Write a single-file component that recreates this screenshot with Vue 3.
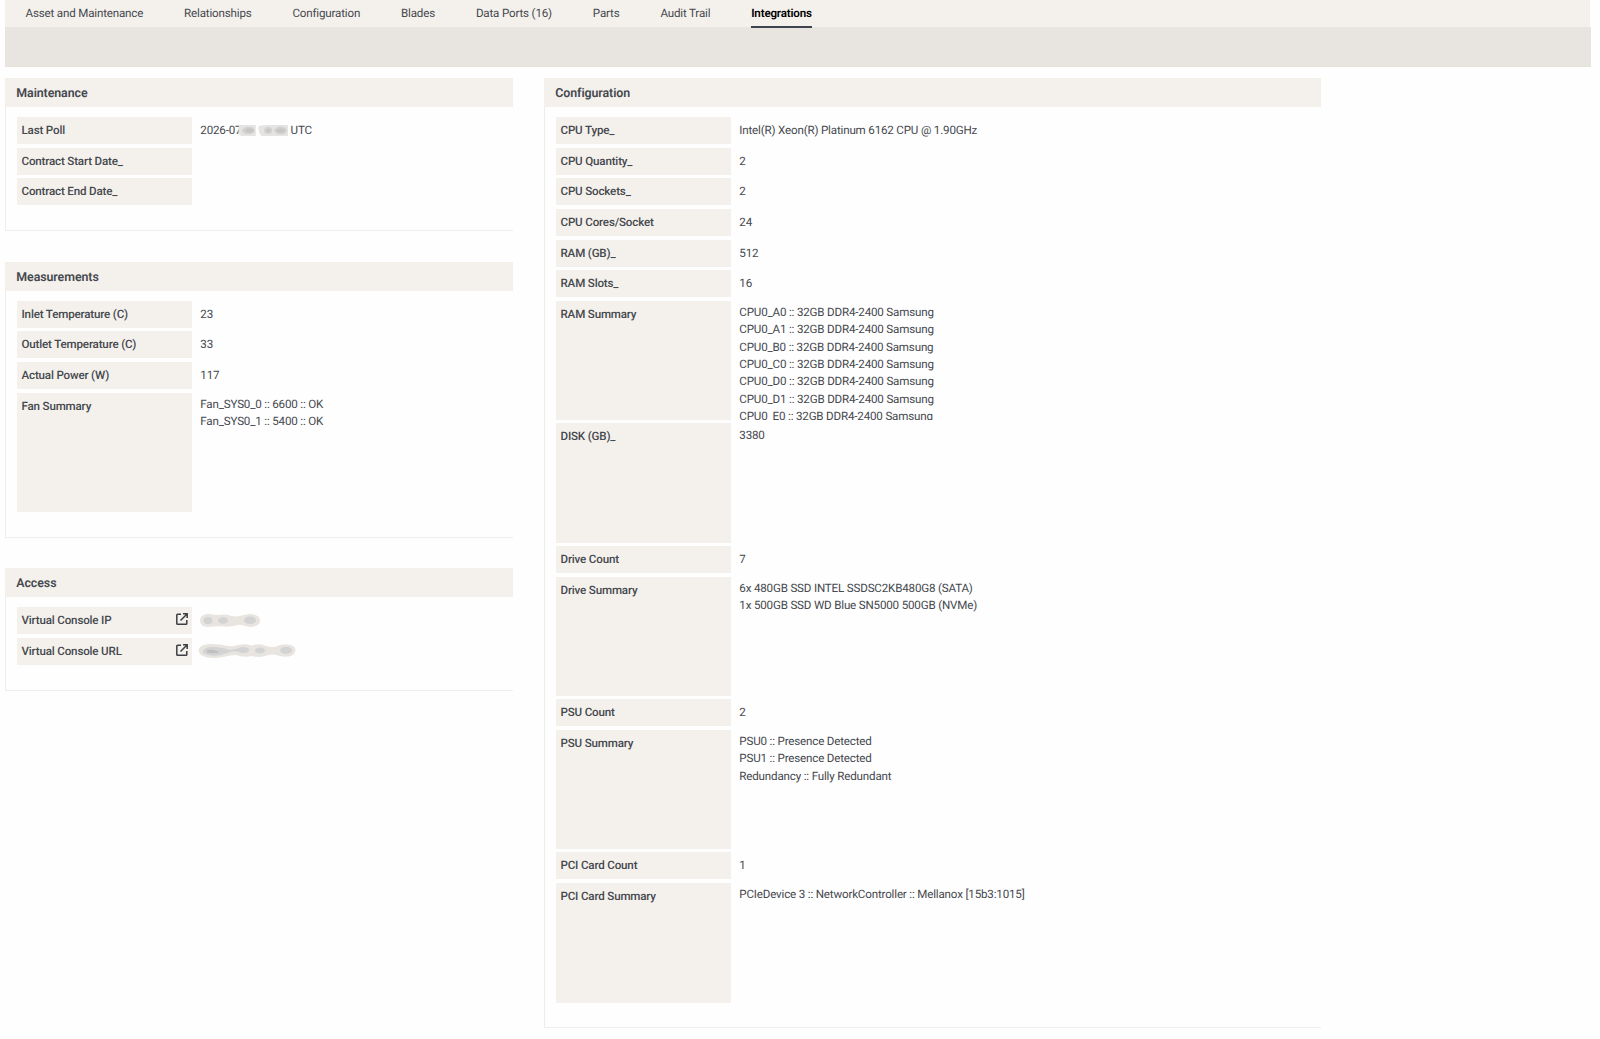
<script setup>
const tabs = ['Asset and Maintenance', 'Relationships', 'Configuration', 'Blades', 'Data Ports (16)', 'Parts', 'Audit Trail', 'Integrations']
const activeTab = 'Integrations'

const left = [
  {
    title: 'Maintenance',
    rows: [
      { label: 'Last Poll', date: true },
      { label: 'Contract Start Date_', value: '' },
      { label: 'Contract End Date_', value: '' },
    ],
  },
  {
    title: 'Measurements',
    rows: [
      { label: 'Inlet Temperature (C)', value: '23' },
      { label: 'Outlet Temperature (C)', value: '33' },
      { label: 'Actual Power (W)', value: '117' },
      { label: 'Fan Summary', lines: ['Fan_SYS0_0 :: 6600 :: OK', 'Fan_SYS0_1 :: 5400 :: OK'] },
    ],
  },
  {
    title: 'Access',
    rows: [
      { label: 'Virtual Console IP', link: true, mask: 'ip' },
      { label: 'Virtual Console URL', link: true, mask: 'url' },
    ],
  },
]

const right = [
  {
    title: 'Configuration',
    rows: [
      { label: 'CPU Type_', value: 'Intel(R) Xeon(R) Platinum 6162 CPU @ 1.90GHz' },
      { label: 'CPU Quantity_', value: '2' },
      { label: 'CPU Sockets_', value: '2' },
      { label: 'CPU Cores/Socket', value: '24' },
      { label: 'RAM (GB)_', value: '512' },
      { label: 'RAM Slots_', value: '16' },
      { label: 'RAM Summary', lines: ['A0', 'A1', 'B0', 'C0', 'D0', 'D1', 'E0'].map((s) => `CPU0_${s} :: 32GB DDR4-2400 Samsung`) },
      { label: 'DISK (GB)_', lines: ['3380'] },
      { label: 'Drive Count', value: '7' },
      { label: 'Drive Summary', lines: ['6x 480GB SSD INTEL SSDSC2KB480G8 (SATA)', '1x 500GB SSD WD Blue SN5000 500GB (NVMe)'] },
      { label: 'PSU Count', value: '2' },
      { label: 'PSU Summary', lines: ['PSU0 :: Presence Detected', 'PSU1 :: Presence Detected', 'Redundancy :: Fully Redundant'] },
      { label: 'PCI Card Count', value: '1' },
      { label: 'PCI Card Summary', lines: ['PCIeDevice 3 :: NetworkController :: Mellanox [15b3:1015]'] },
    ],
  },
]
const columns = [{ name: 'left', panels: left }, { name: 'right', panels: right }]
</script>

<template>
  <div class="page">
    <nav class="tabs">
      <a v-for="t in tabs" :key="t" class="tab" :class="{ active: t === activeTab }">{{ t }}</a>
    </nav>
    <div class="toolbar"></div>
    <main class="columns">
      <div v-for="c in columns" :key="c.name" class="column" :class="c.name">
        <section v-for="p in c.panels" :key="p.title" class="panel">
          <h2 class="title">{{ p.title }}</h2>
          <div class="body">
            <div v-for="r in p.rows" :key="r.label" class="row" :class="{ tall: r.lines }">
              <div class="label">
                <span>{{ r.label }}</span>
                <svg v-if="r.link" class="ext" viewBox="0 0 12 12">
                  <path d="M5 1.2H1.6a.8.8 0 0 0-.8.8v8.4a.8.8 0 0 0 .8.8H10a.8.8 0 0 0 .8-.8V7" />
                  <path d="M7 .8h4.2V5M11 1 4.5 7.5" />
                </svg>
              </div>
              <div v-if="r.lines" class="value multi">
                <div v-for="l in r.lines" :key="l">{{ l }}</div>
              </div>
              <div v-else-if="r.date" class="value date">
                <span class="day">2026-07</span>
                <svg class="mask-date" viewBox="0 0 50 11" preserveAspectRatio="none">
                  <path fill="#e6e4e2" d="M2 0H18V11H4Q0 8 2 0ZM21 1Q30-1 49 0V11H24Q20 8 21 1Z" />
                  <g fill="#d2d2d2"><ellipse cx="11" cy="5.5" rx="6" ry="3.8" /><ellipse cx="30" cy="5.5" rx="4" ry="3.5" /><ellipse cx="42" cy="5.5" rx="6" ry="4" /></g>
                  <g fill="#c6c6c7"><ellipse cx="12" cy="5.5" rx="4" ry="2" /><ellipse cx="30" cy="5.5" rx="2" ry="1.8" /><ellipse cx="42" cy="5.5" rx="4" ry="2" /></g>
                </svg>
                <span>UTC</span>
              </div>
              <div v-else-if="r.mask === 'ip'" class="value">
                <svg class="mask-ip" viewBox="0 0 60 13">
                  <path fill="#e8e5e0" d="M7 0C12 0 14 1 18 1S25 0 28 1 36 3 40 2 47 0 51 0Q60 1 60 6.500T51 13C45 13 42 10 38 11S28 13 24 12.500 13 13 7 13Q0 12 0 6.500T7 0Z" />
                  <g fill="#d3d3d4"><ellipse cx="8" cy="6.500" rx="4.500" ry="3.500" /><ellipse cx="23" cy="6.500" rx="5" ry="3.300" /><ellipse cx="50" cy="6.300" rx="6" ry="3.700" /></g>
                </svg>
              </div>
              <div v-else-if="r.mask === 'url'" class="value">
                <svg class="mask-url" viewBox="0 0 98 14">
                  <path fill="#e8e5e0" d="M6 1Q12-1 18 .5C26 0 30 3 36 2Q46-1 53 1.500 62-1 68 2C74 4 78 3 82 1Q90-1 95 2T95 11Q90 14 82 12C77 10 72 10 67 12Q60 14 54 12 46 14 38 11C30 11 25 14 16 14Q6 14 2 10-2 4 6 1Z" />
                  <path fill="#d3d3d4" d="M5 7Q8 2 18 3 26 4 32 6 40 5 44 3 52 3 51 7 49 10 42 8.500 35 6 29 9 20 13 10 11 3 9 5 7Z" />
                  <g fill="#d3d3d4"><ellipse cx="62" cy="6.500" rx="5" ry="3" /><ellipse cx="88" cy="6.300" rx="6" ry="3.500" /></g>
                  <path fill="#bfbfc0" d="M8 7Q11 5 16 6L22 8Q17 10 11 9 8 8 8 7Z" />
                </svg>
              </div>
              <div v-else class="value">{{ r.value }}</div>
            </div>
          </div>
        </section>
      </div>
    </main>
  </div>
</template>

<style>
body { background: #fefefe; }
</style>

<style scoped>
.page {
  height: 1039px;
  overflow: hidden;
  padding: 0 9px 0 5px;
  box-sizing: border-box;
  font-family: Roboto, "Liberation Sans", sans-serif;
  font-size: 11.600px;
  letter-spacing: -0.175px;
  text-rendering: geometricPrecision;
  color: #45484e;
}
.tabs {
  display: flex;
  gap: 40.900px;
  height: 27px;
  margin-right: 1px;
  padding-left: 20.500px;
  background: #f4f1ec;
}
.tab {
  height: 25.500px;
  line-height: 27px;
  white-space: nowrap;
}
.tab.active {
  color: #000;
  font-weight: 600;
  border-bottom: 2px solid #3f4350;
}
.toolbar {
  height: 40px;
  box-sizing: border-box;
  background: #e8e5e0;
  border-top: 1px solid #e9e6e2;
  border-bottom: 1px solid #e5e2d9;
}
.columns {
  display: flex;
  align-items: flex-start;
  gap: 31px;
  padding-top: 11px;
}
.column {
  display: flex;
  flex-direction: column;
  gap: 30.700px;
}
.left { width: 508px; }
.right { width: 777px; }
.title {
  margin: 0;
  height: 29px;
  line-height: 31px;
  padding-left: 11.300px;
  background: #f4f1ec;
  font-size: 12.400px;
  letter-spacing: -0.080px;
  font-weight: 600;
}
.body {
  padding: 10px 0 21.300px 11px;
  border-left: 1px solid #efede9;
  border-bottom: 1px solid #efeeea;
}
.row {
  display: flex;
  height: 30.640px;
}
.row.tall { height: 122.600px; }
.label {
  display: flex;
  justify-content: space-between;
  width: 175px;
  height: 27px;
  box-sizing: border-box;
  padding: 0 4.500px;
  background: #f4f1ec;
  font-weight: 500;
  line-height: 26.500px;
}
.tall .label { height: 119.500px; }
.value {
  flex: 1;
  padding-left: 8.300px;
  line-height: 27px;
  white-space: nowrap;
}
.multi {
  height: 119.300px;
  padding-top: 3.200px;
  overflow: hidden;
  box-sizing: border-box;
  line-height: 17.330px;
}
.date { display: flex; }
.day {
  width: 40px;
}
.ext {
  width: 12px;
  height: 12px;
  margin-top: 6px;
  fill: none;
  stroke: #3c3f46;
  stroke-width: 1.500;
}
.mask-date { width: 52px; height: 11px; margin: 8px 1.300px 0 -3px; }
.mask-ip { display: block; width: 60px; height: 13px; margin: 7px 0 0 -0.500px; }
.mask-url { display: block; width: 98px; height: 14px; margin: 6.500px 0 0 -2px; }
</style>
